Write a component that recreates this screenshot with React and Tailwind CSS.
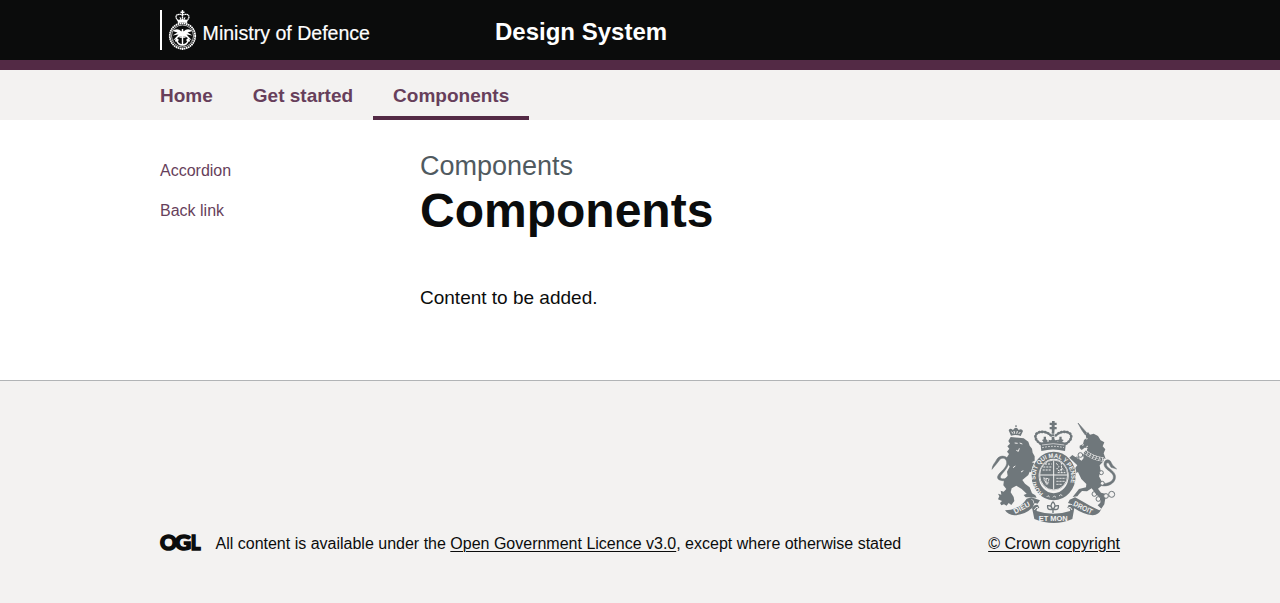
export default function App() {
  return (
    <div className="min-h-[603px] bg-[#f3f2f1] font-['Liberation_Sans',Arial,sans-serif] text-[#0b0c0c]">
      <header className="h-[70px] border-b-10 border-[#532a45] bg-[#0b0c0c]">
        <div className="mx-auto flex h-[60px] w-[960px] items-center text-white">
          <div className="w-[335px]"><MinistryLogo /></div>
          <a href="#" className="pt-1 text-2xl leading-[30px] font-bold">Design System</a>
        </div>
      </header>
      <nav className="h-[50px]">
        <ul className="mx-auto flex h-full w-[960px] text-[19px] leading-[25px] font-bold text-[#673f5b]">
          <li className="h-full pt-[13px] pr-5"><a href="#">Home</a></li>
          <li className="h-full px-5 pt-[13px]"><a href="#">Get started</a></li>
          <li className="h-full border-b-4 border-[#532a45] px-5 pt-[13px]"><a href="#">Components</a></li>
        </ul>
      </nav>
      <div className="h-[260px] bg-white">
        <div className="mx-auto flex w-[960px]">
          <aside className="w-[260px] pt-[41px] text-base leading-5 text-[#673f5b]">
            <ul className="space-y-5">
              <li><a href="#">Accordion</a></li>
              <li><a href="#">Back link</a></li>
            </ul>
          </aside>
          <main className="pt-[31px]">
            <span className="block text-[27px] leading-[30px] text-[#505a5f]">Components</span>
            <h1 className="pt-[5px] text-5xl leading-[50px] font-bold">Components</h1>
            <p className="mt-[49px] text-[19px] leading-[25px]">Content to be added.</p>
          </main>
        </div>
      </div>
      <footer className="border-t border-[#b1b4b6]">
        <div className="mx-auto flex w-[960px] items-end justify-between pt-10 text-base leading-5">
          <div className="flex items-start">
            <OglLogo />
            <p className="ml-[14.5px]">All content is available under the <a href="#" className="underline decoration-1 underline-offset-[1.6px]">Open Government Licence v3.0</a>, except where otherwise stated</p>
          </div>
          <a href="#" className="flex flex-col items-center">
            <Crest />
            <span className="mt-[11px] underline decoration-1 underline-offset-[1.6px]">© Crown copyright</span>
          </a>
        </div>
      </footer>
    </div>
  );
}

function OglLogo() {
  return (
    <svg className="h-[17px] w-[41px] overflow-visible" viewBox="0 0 41 17" fill="#0b0c0c" stroke="#0b0c0c" strokeWidth="1.5">
      <g className="font-['Lato'] text-[21px] font-black">
        <text x="0" y="15.600" textLength="17" lengthAdjust="spacingAndGlyphs">O</text>
        <text x="14.800" y="15.600" textLength="16.400" lengthAdjust="spacingAndGlyphs">G</text>
        <text x="30.800" y="15.600" textLength="9.800" lengthAdjust="spacingAndGlyphs">L</text>
      </g>
    </svg>
  );
}

function MinistryLogo() {
  return (
    <svg className="h-10 w-[212px] overflow-visible" viewBox="0 0 212 40" fill="#fff">
      <path d="M0 0h2v40H0z" />
      <g transform="translate(22.5 0)">
        <path d="M-.7 0H.7v1.500H2v1.400H.7V5H-.7V2.900H-2V1.500H-.7z" />
        <path d="M-4.500 10.500C-9 6-5 2.800 0 5C5 2.800 9 6 4.500 10.500M0 5v6" fill="none" stroke="#fff" strokeWidth="1.300" strokeDasharray="1.500 .3" />
        <path d="M-5 10Q0 8.700 5 10L4.600 13Q0 12-4.600 13zM-3 7l2 1-1 2zM3 7l-2 1 1 2z" />
        <circle cy="26" r="12.700" fill="none" stroke="#fff" strokeWidth="1.800" strokeDasharray="1.600 .5" />
        <circle cy="26" r="11" fill="none" stroke="#fff" strokeWidth=".7" />
        <path d="M-10 21Q-5 17.500-1 21.500L0 19l1 2.500Q5 17.500 10 21L5 22.500l5 3-6-1 6 6.500-8-5h-4l-8 5 6-6.500-6 1 5-3z" />
        <path d="M0 19v16M-3 27h6M-6 29.500Q-5 35 0 35Q5 35 6 29.500M-7 31.500l1-3 2 2M7 31.500l-1-3-2 2M0 38v2" fill="none" stroke="#fff" strokeWidth="1.400" />
      </g>
      <text x="42.600" y="30.300" textLength="167.400" lengthAdjust="spacingAndGlyphs" stroke="#fff" strokeWidth=".2" className="font-['Liberation_Sans',Arial,sans-serif] text-[20.5px]">Ministry of Defence</text>
    </svg>
  );
}

const INK = "#6f777b";
const PAPER = "#f3f2f1";

function Crest() {
  return (
    <svg className="h-[102px] w-[125px] overflow-visible" viewBox="21 18 375 306" fill={INK}>
      {/* Lion */}
      <path d="M77 66L116 70L130 80L134 92L141 101L143 113L149 124L149 137L140 142L151 145L163 155L157 160L146 157L148 164L160 169L158 177L145 174L134 170L130 180L112 195L120 206L134 217L141 235L151 241L155 248L140 247L122 247L116 240L125 236L110 222L94 212L80 220L77 232L86 246L88 258L79 270L71 264L65 272L57 268L49 271L45 264L51 258L39 253L43 244L39 236L49 239L47 227L56 230L64 222L55 211L57 195L68 182L66 170L74 155L68 145L65 128L72 117L66 110L73 101L67 94L75 86L70 78Z" />
      <path d="M89 84l9 1M104 84l8 3M103 100l-3 9-6-3M84 158l7-5M108 171l7-4" fill="none" stroke={PAPER} strokeWidth="3" />
      <path d="M64 197C44 199 32 192 40 180C47 169 63 161 65 145C66 131 53 125 44 134C39 142 31 150 21 163C22 149 31 143 36 132C45 120 61 121 70 132C79 149 56 169 48 181C42 190 51 195 65 189Z" stroke={INK} strokeWidth="1.500" />
      <path d="M78 62L71 46Q74 37 84 45Q93 31 101 45Q110 39 114 48L107 63Q92 57 78 62Z" />
      <path d="M80 50l4 6M87 48l2 8M97 48l-2 8M106 51l-5 6" stroke={PAPER} strokeWidth="3" />
      <path d="M91 31h4v5h-4z" />
      {/* Unicorn */}
      <path d="M279 24L305 53L301 60Q289 45 279 24Z" stroke={INK} strokeWidth="2" />
      <path d="M302 59L309 51L315 59L326 56L339 63L347 76L358 82L353 94L361 103L356 115L362 132L350 127L354 140L344 151L347 169L342 184L350 199L348 214L339 221L348 233L364 237L360 256L358 268L349 281L338 271L346 263L347 251L332 236L320 220L306 229L291 228L283 236L277 244L263 246L270 237L282 222L303 217L304 207L289 192L279 171L268 177L260 166L249 162L259 153L270 160L277 151L266 140L253 128L262 120L272 127L290 137L296 129L294 119L304 109L308 99L299 98L290 105L284 99L284 92L294 87L297 75L304 70Z" />
      <path d="M291 91l6-2M303 97l6-4M303 72l5-1" fill="none" stroke={PAPER} strokeWidth="2.500" />
      <path d="M299 110q23 20 57 24" fill="none" stroke={PAPER} strokeWidth="13" />
      <path d="M299 110q23 20 57 24" fill="none" stroke={INK} strokeWidth="10" strokeDasharray="8 2" />
      <path d="M299 110q23 20 57 24" fill="none" stroke={PAPER} strokeWidth="3" strokeDasharray="4 6" />
      <path d="M346 205C373 209 390 195 384 180C378 168 359 163 357 149C356 137 367 130 376 138L383 151L395 162L378 157L371 144C362 141 362 152 370 158C381 166 397 177 390 194C383 211 361 216 345 211Z" stroke={INK} strokeWidth="1.500" />
      <g fill="none" stroke={INK} strokeWidth="3">
        <circle cx="286" cy="120" r="7" />
        <circle cx="276" cy="132" r="6" />
        <circle cx="349" cy="173" r="6" fill={PAPER} />
        <circle cx="352" cy="205" r="6" fill={PAPER} />
        <circle cx="328" cy="237" r="7" />
        <circle cx="340" cy="252" r="7" fill={PAPER} />
        <circle cx="363" cy="243" r="7" fill={PAPER} />
        <circle cx="380" cy="238" r="9" />
      </g>
      {/* Garter and shield */}
      <ellipse cx="206" cy="184" rx="69" ry="75" fill={PAPER} />
      <ellipse cx="206" cy="183" rx="55.500" ry="62" fill="none" stroke={INK} strokeWidth="21" />
      <defs>
        <path id="garter" d="M176 236C143 212 147 168 166 147C186 123 224 122 243 147C266 171 264 212 235 237" />
      </defs>
      <text fill={PAPER} className="font-['Liberation_Sans',Arial,sans-serif] text-[19px] font-bold">
        <textPath href="#garter" startOffset="1" textLength="248" lengthAdjust="spacingAndGlyphs">HONI SOIT QUI MAL Y PENSE</textPath>
      </text>
      <ellipse cx="206" cy="180" rx="43" ry="46" />
      <ellipse cx="206" cy="180" rx="42" ry="45" fill="none" stroke={PAPER} strokeWidth="2.500" />
      <path d="M206 136v88M165 180h82" stroke={PAPER} strokeWidth="3" />
      <path d="M175 156h25M173 165h27M180 147h20M214 145l8 10-7 7 9 7 6-10 8 8M218 173h23M229 143l1 29" fill="none" stroke={PAPER} strokeWidth="3" strokeDasharray="6 3" />
      <path d="M174 189l18 2-4 17-13-15M179 190l5 19M183 190l4 19M214 190h28M214 199h25M214 208h18" fill="none" stroke={PAPER} strokeWidth="2.500" strokeDasharray="7 2" />
      <path d="M185 246l4-4 5 4M204 247l4-4 5 4M222 243l5-4 5 3" fill="none" stroke={PAPER} strokeWidth="2.500" />
      {/* Royal crown */}
      <path d="M201 18h8v5h6v7h-6v6h6v7h-6l-1 8h-7l-1-8h-6v-7h6v-6h-6v-7h7z" />
      <path d="M167 86C150 76 146 60 159 53C174 47 192 52 201 66M243 86C260 76 264 60 251 53C236 47 218 52 209 66" fill="none" stroke={INK} strokeWidth="8" strokeLinecap="round" strokeDasharray="2 7" />
      <path d="M167 86C150 76 146 60 159 53C174 47 192 52 201 66M243 86C260 76 264 60 251 53C236 47 218 52 209 66" fill="none" stroke={INK} strokeWidth="2" />
      <path d="M204 50v38" stroke={INK} strokeWidth="8" strokeDasharray="6 2" />
      <path d="M166 83q39-10 77 0l-3 25q-36-9-71 0zM177 84l-6-9 5-2v-8h7v8l5 3-5 8zM223 84l-5-8 5-3v-8h7v8l6 2-7 9zM194 83l-4-9 8 2 7-8 6 8 9-2-5 9z" />
      <path d="M171 90q34-8 67 0" fill="none" stroke={PAPER} strokeWidth="2" />
      <path d="M172 98q33-8 65 0" fill="none" stroke={PAPER} strokeWidth="3" strokeDasharray="4 5" />
      {/* Motto ribbons */}
      <path d="M60 286Q103 285 125 251L139 247L165 256L158 266L149 264L143 277Q122 299 88 301Q69 299 60 286Z" />
      <path d="M139 253q9 2 7 12" fill="none" stroke={PAPER} strokeWidth="2" />
      <path d="M141 278Q150 266 159 270L163 279Q154 278 155 288Q205 305 255 288Q257 278 247 279L250 271Q262 265 268 279L262 312Q207 336 148 312Z" />
      <path d="M148 285q4-10 11-8M261 285q-3-10-11-8" fill="none" stroke={PAPER} strokeWidth="3" />
      <path d="M261 268L249 264L254 254L270 247Q292 259 315 272L343 286L349 282Q342 299 323 301Q295 298 267 279Z" />
      <g fill={PAPER} className="font-['Liberation_Sans',Arial,sans-serif] text-[22px] font-bold">
        <text transform="translate(91 297) rotate(-29)" textLength="52" lengthAdjust="spacingAndGlyphs">DIEU</text>
        <text x="161" y="318" textLength="87" lengthAdjust="spacingAndGlyphs">ET MON</text>
        <text transform="translate(263 271) rotate(26)" textLength="62" lengthAdjust="spacingAndGlyphs">DROIT</text>
      </g>
      <path d="M204 260q-12 12 0 23q12-11 0-23M200 283q-14 3-12-11q12-1 13 9M208 283q14 3 12-11q-12-1-13 9M195 284h19M204 284v10" fill={PAPER} stroke={INK} strokeWidth="4" />
    </svg>
  );
}
